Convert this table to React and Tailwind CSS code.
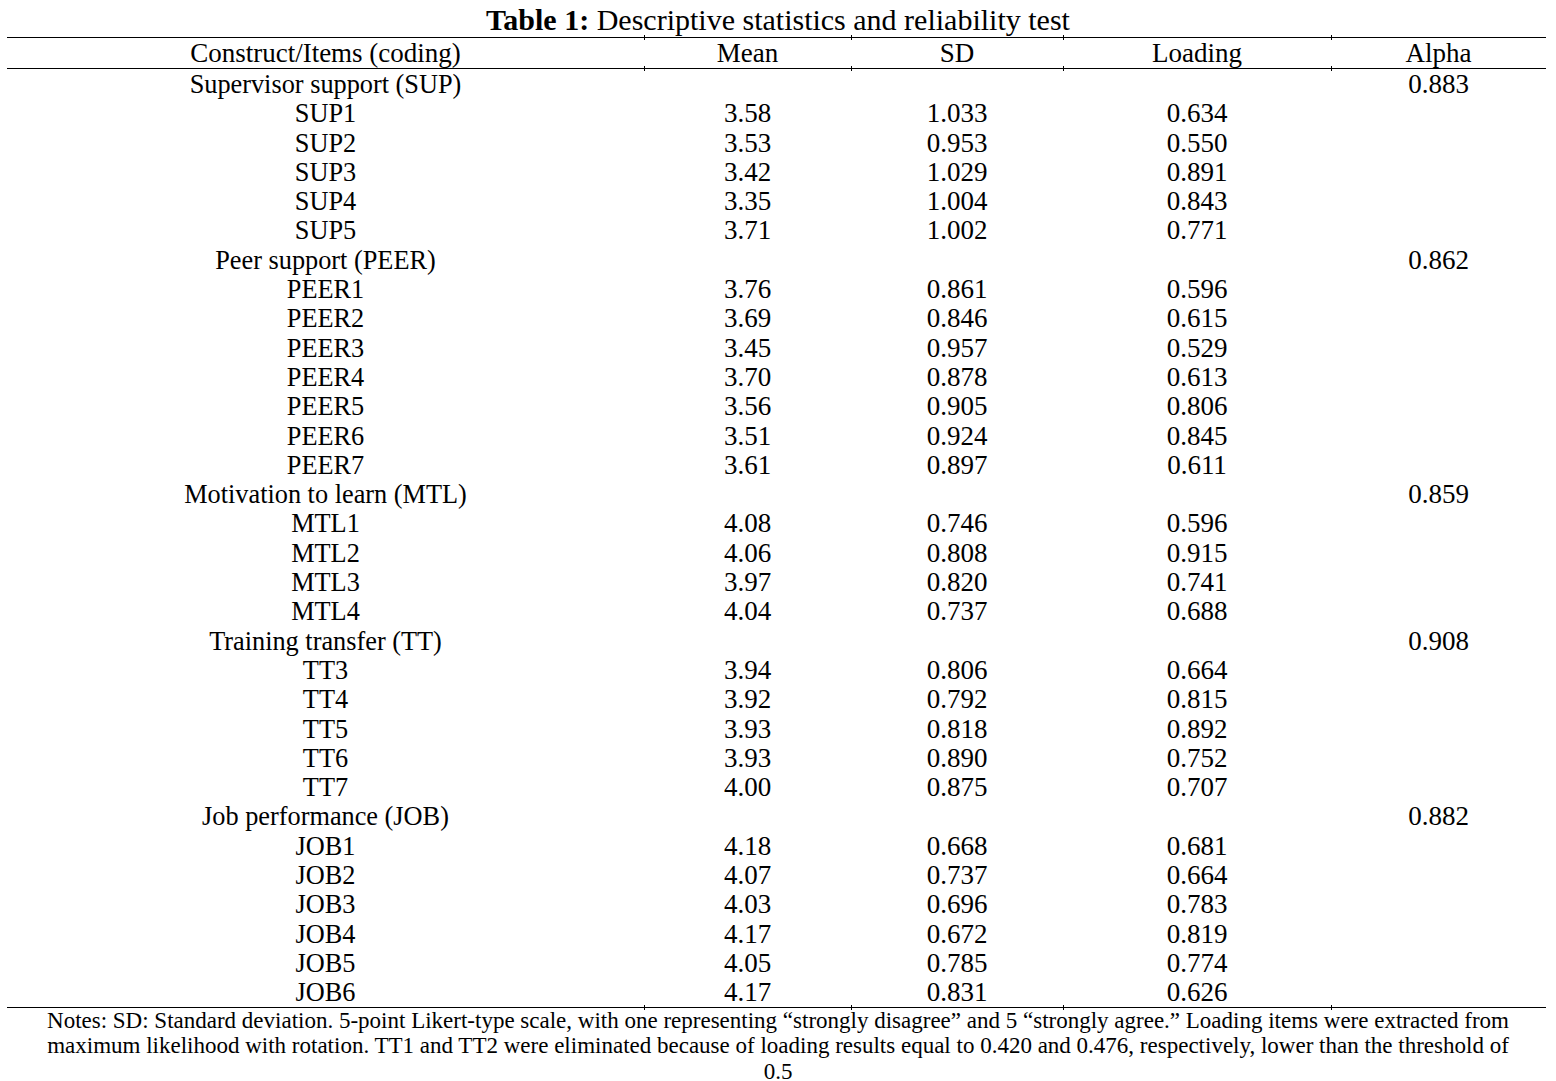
const groups = [
  {
    name: 'Supervisor support (SUP)',
    alpha: '0.883',
    items: [
      ['SUP1', '3.58', '1.033', '0.634'],
      ['SUP2', '3.53', '0.953', '0.550'],
      ['SUP3', '3.42', '1.029', '0.891'],
      ['SUP4', '3.35', '1.004', '0.843'],
      ['SUP5', '3.71', '1.002', '0.771'],
    ],
  },
  {
    name: 'Peer support (PEER)',
    alpha: '0.862',
    items: [
      ['PEER1', '3.76', '0.861', '0.596'],
      ['PEER2', '3.69', '0.846', '0.615'],
      ['PEER3', '3.45', '0.957', '0.529'],
      ['PEER4', '3.70', '0.878', '0.613'],
      ['PEER5', '3.56', '0.905', '0.806'],
      ['PEER6', '3.51', '0.924', '0.845'],
      ['PEER7', '3.61', '0.897', '0.611'],
    ],
  },
  {
    name: 'Motivation to learn (MTL)',
    alpha: '0.859',
    items: [
      ['MTL1', '4.08', '0.746', '0.596'],
      ['MTL2', '4.06', '0.808', '0.915'],
      ['MTL3', '3.97', '0.820', '0.741'],
      ['MTL4', '4.04', '0.737', '0.688'],
    ],
  },
  {
    name: 'Training transfer (TT)',
    alpha: '0.908',
    items: [
      ['TT3', '3.94', '0.806', '0.664'],
      ['TT4', '3.92', '0.792', '0.815'],
      ['TT5', '3.93', '0.818', '0.892'],
      ['TT6', '3.93', '0.890', '0.752'],
      ['TT7', '4.00', '0.875', '0.707'],
    ],
  },
  {
    name: 'Job performance (JOB)',
    alpha: '0.882',
    items: [
      ['JOB1', '4.18', '0.668', '0.681'],
      ['JOB2', '4.07', '0.737', '0.664'],
      ['JOB3', '4.03', '0.696', '0.783'],
      ['JOB4', '4.17', '0.672', '0.819'],
      ['JOB5', '4.05', '0.785', '0.774'],
      ['JOB6', '4.17', '0.831', '0.626'],
    ],
  },
]

const cols = 'grid grid-cols-[637px_207px_212px_268px_215px]'

function Row({ cells }) {
  return (
    <div className={`${cols} h-[29.31px] leading-[31px] text-center`}>
      {cells.map((c, i) => (
        <div key={i} className={i === 0 ? 'text-[26.3px]' : ''}>{c}</div>
      ))}
    </div>
  )
}

// thin rule with the little column ticks Word leaves behind
function Rule() {
  return (
    <div className={`${cols} h-px bg-black`}>
      {[0, 1, 2, 3, 4].map((i) => (
        <div key={i} className="relative">
          {i > 0 && <div className="absolute left-0 -top-[2px] h-[5px] w-px bg-black" />}
        </div>
      ))}
    </div>
  )
}

export default function App() {
  return (
    <div className="w-[1556px] min-h-[1081px] bg-white text-black font-['Liberation_Serif',serif]">
      {/* Title */}
      <div className="h-[37px] pt-[3px] text-center text-[30px] leading-[34px]">
        <span className="font-bold">Table 1:</span> Descriptive statistics and reliability test
      </div>

      <div className="ml-[7px] w-[1539px] text-[27px]">
        <Rule />
        <div className={`${cols} h-[30px] leading-[31px] text-center`}>
          <div>Construct/Items (coding)</div>
          <div>Mean</div>
          <div>SD</div>
          <div>Loading</div>
          <div>Alpha</div>
        </div>
        <Rule />

        {groups.map((g) => (
          <div key={g.name}>
            <Row cells={[g.name, '', '', '', g.alpha]} />
            {g.items.map((it) => (
              <Row key={it[0]} cells={it} />
            ))}
          </div>
        ))}

        <Rule />
      </div>

      {/* Notes */}
      <div className="text-center text-[23px] leading-[25.5px]">
        Notes: SD: Standard deviation. 5-point Likert-type scale, with one representing “strongly disagree” and 5 “strongly agree.” Loading items were extracted from
        <br />
        maximum likelihood with rotation. TT1 and TT2 were eliminated because of loading results equal to 0.420 and 0.476, respectively, lower than the threshold of
        <br />
        0.5
      </div>
    </div>
  )
}
